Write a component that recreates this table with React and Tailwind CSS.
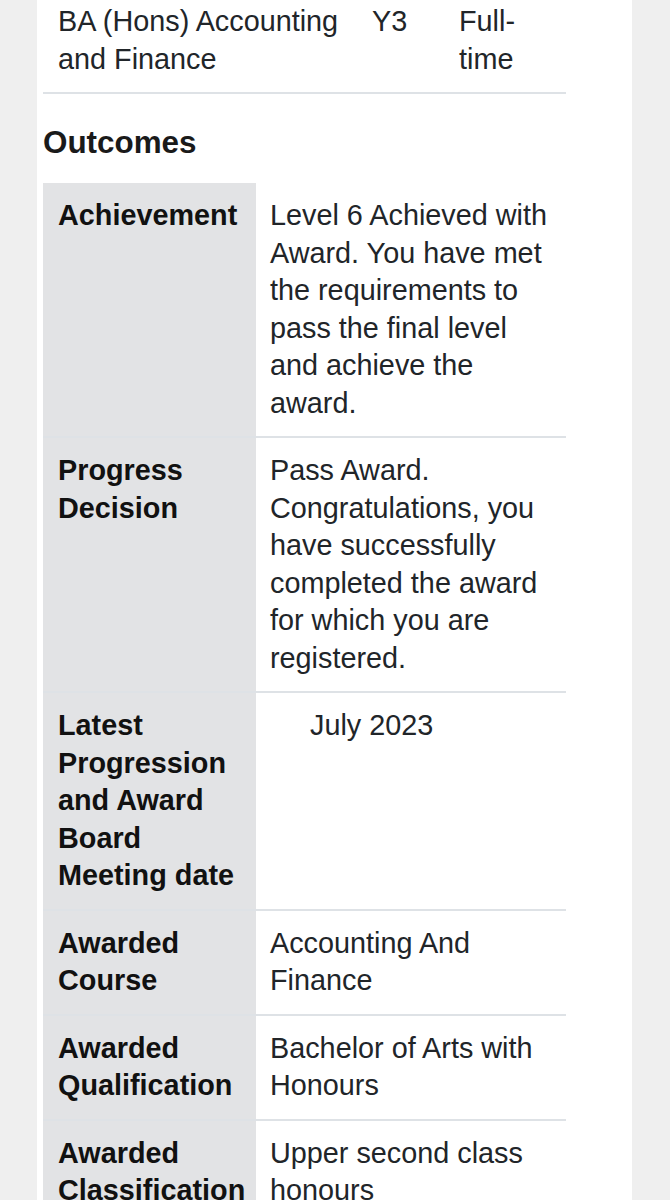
export default function App() {
  const rows = [
    {
      label: "Achievement",
      value:
        "Level 6 Achieved with Award. You have met the requirements to pass the final level and achieve the award.",
    },
    {
      label: "Progress Decision",
      value:
        "Pass Award. Congratulations, you have successfully completed the award for which you are registered.",
    },
    {
      label: "Latest Progression and Award Board Meeting date",
      value: "July 2023",
      indent: true,
    },
    { label: "Awarded Course", value: "Accounting And Finance" },
    { label: "Awarded Qualification", value: "Bachelor of Arts with Honours" },
    { label: "Awarded Classification", value: "Upper second class honours" },
  ];
  return (
    <div
      className="min-h-[1200px] w-[670px] bg-[#efefef] text-[#212529]"
      style={{ fontFamily: '"Liberation Sans", Arial, sans-serif' }}
    >
      <div className="ml-[37px] w-[595px] min-h-[1200px] bg-white pl-[6px]">
        <div className="w-[523px]">
          <div className="flex border-b-2 border-[#dee2e6] text-[28.8px] leading-[37.5px]">
            <div className="w-[315px] pl-[15px] pr-[8px] pt-[3px] pb-[14px]">
              BA (Hons) Accounting and Finance
            </div>
            <div className="w-[87px] pl-[14px] pt-[3px] pb-[14px]">Y3</div>
            <div className="w-[121px] pl-[14px] pr-[20px] pt-[3px] pb-[14px]">
              Full-time
            </div>
          </div>
          <h2 className="mt-[31px] mb-[22px] text-[31.4px] leading-[36px] font-bold text-[#1a1a1a]">
            Outcomes
          </h2>
          <div className="text-[28.8px] leading-[37.5px]">
            {rows.map((r, i) => (
              <div key={i} className="flex border-b-2 border-[#dee2e6]">
                <div className="w-[213px] shrink-0 bg-[#e2e3e5] pl-[15px] pr-[4px] py-[14px] font-bold text-[#111]">
                  {r.label}
                </div>
                <div
                  className={
                    r.indent
                      ? "flex-1 pl-[54px] pr-[12px] py-[14px]"
                      : "flex-1 pl-[14px] pr-[12px] py-[14px]"
                  }
                >
                  {r.value}
                </div>
              </div>
            ))}
          </div>
        </div>
      </div>
    </div>
  );
}
